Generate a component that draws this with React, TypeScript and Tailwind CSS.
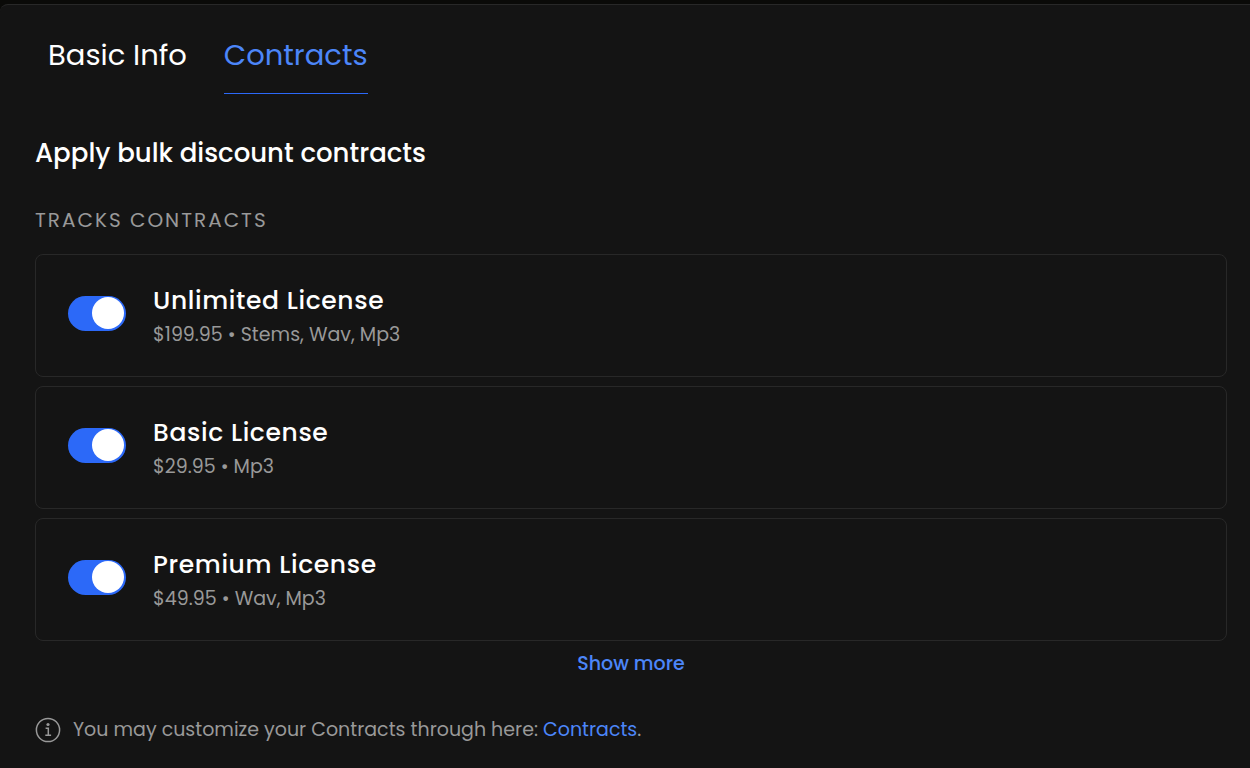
import { useState } from 'react';

type Tab = 'basic' | 'contracts';

interface Contract {
  id: string;
  name: string;
  price: string;
  files: string;
}

const tabs: Array<{ label: string; value: Tab }> = [
  { label: 'Basic Info', value: 'basic' },
  { label: 'Contracts', value: 'contracts' },
];

const contracts: Contract[] = [
  { id: 'unlimited', name: 'Unlimited License', price: '$199.95', files: 'Stems, Wav, Mp3' },
  { id: 'basic', name: 'Basic License', price: '$29.95', files: 'Mp3' },
  { id: 'premium', name: 'Premium License', price: '$49.95', files: 'Wav, Mp3' },
];

function InfoIcon() {
  return (
    <svg viewBox="0 0 26 26" className="size-[26px] shrink-0" fill="none" stroke="currentColor" aria-hidden="true">
      <circle cx="13" cy="13" r="11.6" strokeWidth="1.5" />
      <path d="M10.6 11.2h2.7v7.1M10.3 18.3h5.8" strokeWidth="1.5" />
      <circle cx="13" cy="7.5" r="1.6" fill="currentColor" stroke="none" />
    </svg>
  );
}

function ContractRow({ contract }: { contract: Contract }) {
  const [enabled, setEnabled] = useState(true);

  return (
    <li className="flex items-start gap-[27px] rounded-lg border border-[#282828] px-8 py-[27px]">
      <input
        id={contract.id}
        type="checkbox"
        role="switch"
        checked={enabled}
        onChange={(event) => setEnabled(event.target.checked)}
        className="mt-[14px] flex h-[35px] w-[58px] shrink-0 cursor-pointer appearance-none items-start rounded-full bg-[#3a3a3a] px-[2px] pt-px before:size-8 before:rounded-full before:bg-white checked:justify-end checked:bg-[#2c69f8]"
      />
      <label htmlFor={contract.id} className="cursor-pointer">
        <span className="block text-[25px] leading-[38px] font-medium tracking-wide text-white">{contract.name}</span>
        <span className="block text-[19px] leading-[29px] text-[#999999]">
          {contract.price} • {contract.files}
        </span>
      </label>
    </li>
  );
}

export default function App() {
  const [tab, setTab] = useState<Tab>('contracts');

  return (
    <div className="min-h-screen bg-[#0a0a08] pt-1 font-['Poppins','Inter',sans-serif]">
      <main className="min-h-[calc(100vh-4px)] rounded-tl-lg border-t border-[#282828] bg-[#141414] pr-[23px] pb-6 pl-[35px]">
        <nav className="flex gap-[37px] px-[13px] pt-6">
          {tabs.map(({ label, value }) => (
            <button
              key={value}
              type="button"
              onClick={() => setTab(value)}
              className={`h-[65px] cursor-pointer border-b pb-[10px] text-[29px] ${
                tab === value ? 'border-[#2c69f8] text-[#4c86f9]' : 'border-transparent text-white'
              }`}
            >
              {label}
            </button>
          ))}
        </nav>

        <h1 className="mt-[39px] text-[26px] leading-10 font-medium text-white">Apply bulk discount contracts</h1>
        <h2 className="mt-[33px] text-xl leading-7 tracking-widest text-[#999999] uppercase">Tracks contracts</h2>

        <ul className="mt-5 flex flex-col gap-[9px]">
          {contracts.map((contract) => (
            <ContractRow key={contract.id} contract={contract} />
          ))}
        </ul>

        <div className="mt-[9px] flex justify-center">
          <button type="button" className="cursor-pointer text-[19px] leading-7 font-medium text-[#4c86f9]">
            Show more
          </button>
        </div>

        <div className="mt-[38px] flex items-center gap-3 text-[19px] leading-7 text-[#999999]">
          <InfoIcon />
          <p>
            You may customize your Contracts through here:{' '}
            <a href="#contracts" className="text-[#4c86f9]">Contracts</a>.
          </p>
        </div>
      </main>
    </div>
  );
}
